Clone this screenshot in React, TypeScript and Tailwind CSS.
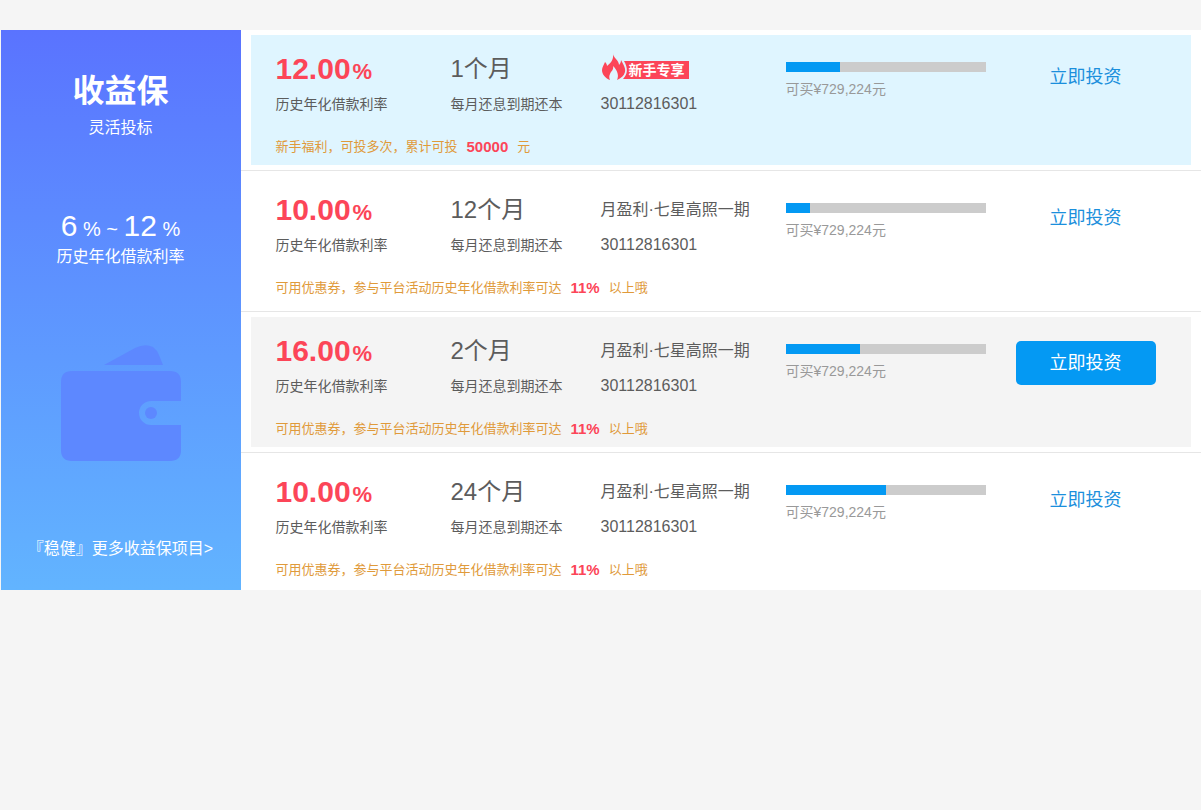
import React from "react";
import clsx from "clsx";

type Project = {
  rate: string;
  term: string;
  name?: string;
  code: string;
  sold: number;
  left: string;
  tip: string;
  tipValue: string;
  tipEnd: string;
  tone: "new" | "plain" | "active";
};

const coupon = {
  tip: "可用优惠券，参与平台活动历史年化借款利率可达",
  tipValue: "11%",
  tipEnd: "以上哦",
};

const projects: Project[] = [
  {
    rate: "12.00",
    term: "1个月",
    code: "30112816301",
    sold: 27,
    left: "729,224",
    tip: "新手福利，可投多次，累计可投",
    tipValue: "50000",
    tipEnd: "元",
    tone: "new",
  },
  {
    rate: "10.00",
    term: "12个月",
    name: "月盈利·七星高照一期",
    code: "30112816301",
    sold: 12,
    left: "729,224",
    ...coupon,
    tone: "plain",
  },
  {
    rate: "16.00",
    term: "2个月",
    name: "月盈利·七星高照一期",
    code: "30112816301",
    sold: 37,
    left: "729,224",
    ...coupon,
    tone: "active",
  },
  {
    rate: "10.00",
    term: "24个月",
    name: "月盈利·七星高照一期",
    code: "30112816301",
    sold: 50,
    left: "729,224",
    ...coupon,
    tone: "plain",
  },
];

function Wallet() {
  return (
    <svg viewBox="0 0 120 116" className="h-[116px] w-[120px] fill-[#5d88ff]">
      <path d="M43 20 L74 3 Q84 -2 92 2 Q96 5 98 10 L102 20 Z" />
      <path d="M11 26 H109 Q120 26 120 37 V56 H90 A12 12 0 0 0 90 80 H120 V105 Q120 116 109 116 H11 Q0 116 0 105 V37 Q0 26 11 26 Z" />
      <circle cx="90" cy="68" r="6" />
    </svg>
  );
}

function NewBadge() {
  return (
    <div className="flex items-end self-start pt-[5px]">
      <svg viewBox="0 0 28 28" className="h-7 w-7 fill-[#fc4558]">
        <path d="M12 1 C12 6 18 8 18 13 C19 12 20 10 20 8 C22 12 25 16 24 20 C23 24 20 26 16 28 C18 24 17 19 12 14 C13 18 10 19 9 22 C8 24 8 26 9 28 C4 26 1 22 1 18 C1 15 3 13 4 10 C5 11 6 12 6 14 C10 11 13 7 12 1 Z" />
        <path d="M23 9 H28 V27 H22 C27 22 27 16 23 9 Z" />
      </svg>
      <span className="mb-px h-[18px] bg-[#fc4558] pr-1 text-sm leading-[18px] font-bold text-white">
        新手专享
      </span>
    </div>
  );
}

function ProjectRow({ project }: { project: Project }) {
  const { rate, term, name, code, sold, left, tip, tipValue, tipEnd, tone } =
    project;

  return (
    <li className="border-b border-[#e6e6e6] px-2.5 py-[5px] last:border-b-0 last:pb-0.5">
      <div
        className={clsx(
          "pt-3 pr-[35px] pb-2 pl-[25px]",
          tone === "new" && "bg-[#dff5ff]",
          tone === "active" && "bg-[#f4f4f4]"
        )}
      >
        <div className="grid grid-cols-[175fr_150fr_185fr_200fr_170fr]">
          <div>
            <p className="h-11 text-3xl leading-[44px] font-bold text-[#fc4558]">
              {rate}
              <span className="ml-0.5 text-[22px]">%</span>
            </p>
            <p className="text-sm leading-[26px]">历史年化借款利率</p>
          </div>
          <div>
            <p className="h-11 text-2xl leading-[44px]">{term}</p>
            <p className="text-sm leading-[26px]">每月还息到期还本</p>
          </div>
          <div>
            <div className="flex h-11 items-center leading-[44px]">
              {name ? name : <NewBadge />}
            </div>
            <p className="leading-[26px]">{code}</p>
          </div>
          <div className="pt-[15px]">
            <div
              role="progressbar"
              aria-valuenow={sold}
              className="h-2.5 w-full bg-[#ccc]"
            >
              <div
                className="h-full bg-[#0499f3]"
                style={{ width: `${sold}%` }}
              ></div>
            </div>
            <p className="mt-1.5 text-sm leading-[22px] text-[#999]">
              可买¥{left}元
            </p>
          </div>
          <div className="flex items-start justify-end pt-3">
            <button
              className={clsx(
                "w-[140px] rounded-[5px] text-lg",
                tone === "active"
                  ? "h-11 bg-[#0499f3] text-white"
                  : "h-9 text-[#1b8fdc]"
              )}
            >
              立即投资
            </button>
          </div>
        </div>
        <p className="mt-5 flex gap-[9px] text-[13px] leading-5 text-[#e09a3a]">
          {tip}
          <strong className="text-[15px] text-[#fc4558]">{tipValue}</strong>
          {tipEnd}
        </p>
      </div>
    </li>
  );
}

export default function App() {
  return (
    <main className="min-h-screen bg-[#f5f5f5] pt-[30px] font-['Liberation_Sans','Noto_Sans_CJK_SC',sans-serif] text-base text-[#5c5c5c]">
      <section className="mx-auto flex w-full max-w-[1200px] bg-white">
        <aside className="flex w-60 shrink-0 flex-col items-center bg-linear-to-b from-[#5a73ff] to-[#62b4ff] pt-9 text-white">
          <h2 className="text-[32px] leading-[50px] font-bold">收益保</h2>
          <p className="leading-6">灵活投标</p>
          <p className="mt-[70px] text-xl leading-8">
            <span className="text-3xl leading-8">6</span> % ~{" "}
            <span className="text-3xl leading-8">12</span> %
          </p>
          <p className="leading-6">历史年化借款利率</p>
          <div className="mt-[76px]">
            <Wallet />
          </div>
          <a href="#more" className="mt-[76px] leading-6">
            『稳健』更多收益保项目&gt;
          </a>
        </aside>
        <ul className="min-w-0 flex-1">
          {projects.map((project, i) => (
            <ProjectRow key={i} project={project} />
          ))}
        </ul>
      </section>
    </main>
  );
}
